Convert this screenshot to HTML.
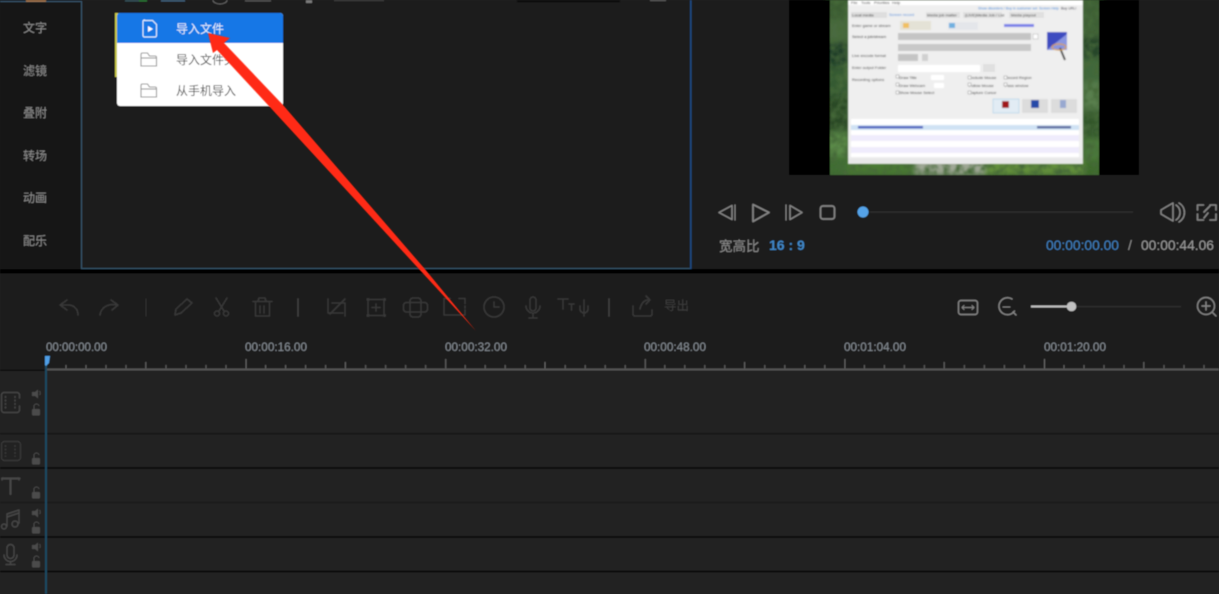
<!DOCTYPE html>
<html lang="zh">
<head>
<meta charset="utf-8">
<title>视频编辑器</title>
<style>
html,body{margin:0;padding:0;width:1219px;height:594px;overflow:hidden;background:#1e1e1e}
svg{display:block;position:absolute;left:0;top:0}
text{font-family:"Liberation Sans","Noto Sans CJK SC",sans-serif}
</style>
</head>
<body>
<svg width="1219" height="594" viewBox="0 0 1219 594" xmlns="http://www.w3.org/2000/svg">
<defs>
<filter id="b" x="-2%" y="-2%" width="104%" height="104%"><feGaussianBlur stdDeviation="0.65"/></filter>
<filter id="a" x="-2%" y="-2%" width="104%" height="104%"><feGaussianBlur stdDeviation="0.4"/></filter>
<filter id="b2" x="-2%" y="-2%" width="104%" height="104%"><feGaussianBlur stdDeviation="0.6"/></filter>
<filter id="b3" x="-5%" y="-5%" width="110%" height="110%"><feGaussianBlur stdDeviation="3"/></filter>
<filter id="t" x="0" y="0" width="100%" height="100%">
<feTurbulence type="fractalNoise" baseFrequency="0.16" numOctaves="2" seed="4"/>
<feColorMatrix values="0 0 0 0 0.06  0 0 0 0 0.14  0 0 0 0 0.04  0 0 0 2.2 -0.75"/>
<feGaussianBlur stdDeviation="0.8"/>
<feComposite in2="SourceGraphic" operator="in"/>
</filter>
<pattern id="ticks" x="46" y="356" width="199.6" height="14" patternUnits="userSpaceOnUse">
<g stroke="#6a6a6a" stroke-width="1">
<path d="M0.500 3V13M20 9V13M40 9V13M60 9V13M80 9V13M99.800 6V13M120 9V13M140 9V13M160 9V13M180 9V13"/>
</g>
</pattern>
</defs>

<g filter="url(#b)">
<!-- base panels -->
<rect width="1219" height="594" fill="#1e1e1e"/>
<rect x="0" y="0" width="81" height="268" fill="#141414"/>
<path d="M0 1.500H81.500V268.500H690" fill="none" stroke="#38586f" stroke-width="1.100"/>
<rect x="690" y="0" width="1.600" height="269" fill="#1a4a80"/>
<rect x="0" y="269" width="1219" height="4.500" fill="#000"/>

<!-- clipped top row -->
<rect x="26" y="0" width="20" height="1.800" fill="#a8744a"/>
<rect x="125" y="0" width="14" height="1.500" fill="#34525c"/>
<rect x="139" y="0" width="8" height="1.500" fill="#2a7a34"/>
<rect x="161" y="0" width="24" height="1.500" fill="#40627e"/>
<path d="M213 0a7 4 0 0 0 14 0" fill="none" stroke="#666" stroke-width="1.100"/>
<rect x="245" y="0" width="26" height="1.500" fill="#555"/>
<rect x="306" y="0" width="6" height="3" fill="#7a7a7a"/>
<rect x="334" y="0" width="50" height="1" fill="#444"/>
<rect x="517" y="0" width="103" height="2.500" fill="#111"/>
<rect x="650" y="0" width="16" height="1" fill="#666"/>

<!-- sidebar labels -->
<g font-size="12" fill="#8c8c8c" text-anchor="middle">
<text x="35" y="32">文字</text>
<text x="35" y="75">滤镜</text>
<text x="35" y="117">叠附</text>
<text x="35" y="160">转场</text>
<text x="35" y="202">动画</text>
<text x="35" y="245">配乐</text>
</g>

<!-- popup menu -->
<rect x="115" y="13" width="3" height="64" fill="#c8c84a"/>
<rect x="117" y="13" width="166" height="93" rx="3" fill="#fff"/>
<path d="M117 43V16a3 3 0 0 1 3-3H280a3 3 0 0 1 3 3V43Z" fill="#1677e6"/>
<path d="M144.500 20.500h8l4 4v11a1.500 1.500 0 0 1-1.500 1.500h-10.500a1.500 1.500 0 0 1-1.500-1.500v-14a1.500 1.500 0 0 1 1.500-1.500z" fill="none" stroke="#dcebfb" stroke-width="1.200"/>
<path d="M148 26l5 3-5 3z" fill="#fff"/>
<g fill="none" stroke="#9a9a9a" stroke-width="1.100">
<path d="M141 66V54.500a1.500 1.500 0 0 1 1.500-1.500h5l2 3h5.500a1.500 1.500 0 0 1 1.500 1.500V66z"/>
<path d="M141 58h15.500"/>
<path d="M141 97V85.500a1.500 1.500 0 0 1 1.500-1.500h5l2 3h5.500a1.500 1.500 0 0 1 1.500 1.500V97z"/>
<path d="M141 89h15.500"/>
</g>
<g font-size="12">
<text x="176" y="33" fill="#e6f0fc">导入文件</text>
<text x="176" y="64" fill="#555">导入文件夹</text>
<text x="176" y="95" fill="#555">从手机导入</text>
</g>

<!-- preview -->
<rect x="789" y="0" width="350" height="175" fill="#000"/>
<rect x="830" y="0" width="269" height="175" fill="#3a5f30"/>
<g filter="url(#b3)">
<rect x="826" y="0" width="22" height="20" fill="#3a5c30"/>
<rect x="826" y="20" width="22" height="22" fill="#4a6a40"/>
<rect x="826" y="42" width="22" height="24" fill="#22402a"/>
<rect x="826" y="66" width="22" height="30" fill="#355a30"/>
<rect x="826" y="96" width="22" height="36" fill="#2c4a26"/>
<rect x="826" y="132" width="22" height="24" fill="#5c8c48"/>
<rect x="826" y="156" width="22" height="19" fill="#3f6e30"/>
<rect x="1083" y="0" width="20" height="38" fill="#3d5e34"/>
<rect x="1083" y="38" width="20" height="20" fill="#26452a"/>
<rect x="1083" y="58" width="20" height="24" fill="#40683a"/>
<rect x="1083" y="82" width="20" height="28" fill="#5a8050"/>
<rect x="1083" y="110" width="20" height="28" fill="#33562c"/>
<rect x="1083" y="138" width="20" height="22" fill="#4c7a3a"/>
<rect x="1083" y="160" width="20" height="15" fill="#3c6c2c"/>
<rect x="848" y="160" width="68" height="15" fill="#4a7a32"/>
<rect x="916" y="160" width="68" height="15" fill="#a0a896"/>
<rect x="984" y="160" width="100" height="15" fill="#64903a"/>
</g>
<rect x="830" y="0" width="18" height="175" fill="#000" filter="url(#t)"/>
<rect x="1083" y="0" width="16" height="175" fill="#000" filter="url(#t)"/>
<rect x="848" y="164" width="235" height="11" fill="#000" filter="url(#t)"/>
<rect x="789" y="0" width="41" height="175" fill="#000"/>
<rect x="1099" y="0" width="40" height="175" fill="#000"/>
<rect x="789" y="175" width="350" height="6" fill="#1e1e1e"/>
<g filter="url(#b2)">
<rect x="848" y="0" width="235" height="164" fill="#efefef"/>
<rect x="848" y="0" width="235" height="5" fill="#fff"/>
<rect x="851" y="12" width="36" height="6" fill="#dedede"/>
<rect x="926" y="12" width="34" height="6" fill="#e0e0e0"/>
<rect x="963" y="12" width="39" height="6" fill="#e0e0e0"/>
<rect x="1009" y="12" width="35" height="6" fill="#e0e0e0"/>
<g font-size="4" fill="#333">
<text x="851" y="4">File</text><text x="861" y="4">Tools</text><text x="874" y="4">Priorities</text><text x="892" y="4">Help</text>
<text x="978" y="9.500" fill="#3a86d8" font-size="3.600">Show disorders / Buy in customer set</text>
<text x="1039" y="9.500" fill="#3a86d8" font-size="3.600">Screen Help</text>
<text x="1061" y="9.500" fill="#223" font-size="3.600">Buy URL!</text>
<text x="852" y="16.500">Local media</text>
<text x="889" y="16" fill="#4a8ad8">Screen record</text>
<text x="927" y="16.500">Media job matter</text>
<text x="965" y="16.500">(LIVE)Media Job / List</text>
<text x="1011" y="16.500">Media playout</text>
<text x="852" y="27">Enter game or stream</text>
<text x="852" y="38" fill="#222">Select a job/stream</text>
<text x="852" y="57">Live encode format</text>
<text x="852" y="69">Enter output Folder</text>
<text x="852" y="81">Recording options</text>
<text x="899" y="69">C:\recording</text>
<text x="899" y="79">Draw Title</text>
<text x="899" y="87">Draw Webcam</text>
<text x="899" y="94">Show Mouse Select</text>
<text x="969" y="79">Exclude Mouse</text>
<text x="969" y="87">Follow Mouse</text>
<text x="969" y="94">Capture Cursor</text>
<text x="1005" y="79">Record Region</text>
<text x="1005" y="87">Pass window</text>
<text x="853" y="163">Ready</text>
</g>
<rect x="900" y="21" width="31" height="9" fill="#e4e2d6"/>
<rect x="903" y="23" width="6" height="5" fill="#f0c060"/>
<rect x="948" y="22" width="30" height="8" fill="#e4e6ea"/>
<rect x="949" y="23" width="6" height="5" fill="#70b0e0"/>
<rect x="1004" y="24" width="30" height="3" fill="#7a80e8"/>
<rect x="898" y="33" width="133" height="7" fill="#c4c4c4"/>
<rect x="898" y="44" width="133" height="7" fill="#c8c8c8"/>
<rect x="1033" y="34" width="5" height="5" fill="#fff" stroke="#aaa" stroke-width=".5"/>
<rect x="1047" y="32" width="20" height="18" fill="#3c4cc0"/>
<path d="M1048 49l19-15v16h-19z" fill="#8a96e0"/>
<path d="M1060 48l5 12" stroke="#222" stroke-width="1.800"/>
<ellipse cx="1059" cy="47" rx="7" ry="3" fill="none" stroke="#d8a040" stroke-width="1.200"/>
<rect x="898" y="54" width="20" height="7" fill="#c4c4c4"/>
<rect x="922" y="54" width="6" height="7" fill="#d0d0d0"/>
<rect x="898" y="65" width="82" height="7" fill="#fff"/>
<rect x="983" y="64" width="12" height="8" fill="#e0e0e0"/>
<rect x="931" y="75" width="13" height="5" fill="#fff"/>
<rect x="934" y="83" width="10" height="5" fill="#fff"/>
<g fill="#fff" stroke="#888" stroke-width=".5">
<rect x="896" y="75" width="3" height="3"/><rect x="896" y="83" width="3" height="3"/><rect x="896" y="91" width="3" height="3"/>
<rect x="968" y="76" width="3" height="3"/><rect x="968" y="83" width="3" height="3"/><rect x="968" y="91" width="3" height="3"/>
<rect x="1004" y="76" width="3" height="3"/><rect x="1004" y="83" width="3" height="3"/>
</g>
<rect x="993" y="99" width="26" height="14" fill="#e2ecf4" stroke="#a8cce4" stroke-width=".6"/>
<rect x="1002" y="101" width="7" height="7" fill="#a01818"/>
<rect x="1022" y="99" width="26" height="14" fill="#dcdcdc"/>
<rect x="1031" y="100" width="8" height="8" fill="#2848a8"/>
<rect x="1051" y="99" width="26" height="14" fill="#dcdcdc"/>
<rect x="1060" y="100" width="6" height="8" fill="#98a8d0"/>
<rect x="851" y="119" width="228" height="38" fill="#fff"/>
<rect x="851" y="125" width="228" height="5" fill="#cfe2f4"/>
<rect x="858" y="126" width="65" height="2.500" fill="#4a60c0"/>
<rect x="1037" y="126" width="34" height="2.500" fill="#5a6aa0"/>
<rect x="851" y="135" width="228" height="6" fill="#efecfc"/>
<rect x="851" y="147" width="228" height="6" fill="#efecfc"/>
<rect x="848" y="158" width="235" height="6" fill="#e8e8e8"/>
</g>

<!-- player controls -->
<g fill="none" stroke="#858585" stroke-width="1.500" stroke-linejoin="round" stroke-linecap="round">
<path d="M732 205.500L719 212.500L732 219.500Z"/><path d="M735 205V220" stroke-width="1.200"/>
<path d="M753 204.500L769 212.500L753 221.500Z" stroke-width="1.700"/>
<path d="M786 205V220" stroke-width="1.200"/><path d="M790 205.500L802 212.500L790 219.500Z"/>
<rect x="820.500" y="206" width="14" height="13" rx="2.500" stroke-width="1.700"/>
<path d="M1161 210v4l5 3 7 4v-18l-7 4z"/>
<path d="M1176 205a9 9 0 0 1 0 15M1179 203a11 11 0 0 1 0 19"/>
<path d="M1197.500 210v-5h6M1216 205h-6M1216 205v5M1197.500 214v6h6M1216 214v6h-6M1210 206l-6 6M1208 213l-4 5" stroke-width="1.600"/>
</g>
<rect x="870" y="211.500" width="263" height="1.200" fill="#333"/>
<circle cx="863" cy="212" r="5.500" fill="#55a3e8"/>
<text x="719" y="251" font-size="13.500" fill="#8c8c8c">宽高比</text>
<text x="769" y="250" font-size="14" font-weight="bold" fill="#3f87c8">16 : 9</text>
<text x="1046" y="250" font-size="14" fill="#3f80c0" textLength="73" lengthAdjust="spacingAndGlyphs">00:00:00.00</text>
<text x="1128" y="250" font-size="14" fill="#8c8c8c">/</text>
<text x="1141" y="250" font-size="14" fill="#9a9a9a" textLength="73" lengthAdjust="spacingAndGlyphs">00:00:44.06</text>

<!-- timeline toolbar -->
<g fill="none" stroke="#393939" stroke-width="1.500" stroke-linejoin="round" stroke-linecap="round">
<path d="M67 300l-7 5 7 5M61 305h7c6 0 10 4 10 10"/>
<path d="M111 300l7 5-6 5M117 305c-8-2-16 2-17 10"/>
<path d="M146 299V316" stroke="#303030" stroke-width="1"/>
<path d="M175 315l1-6 11-10 5 4-11 10z"/>
<path d="M216 298l8 13M227 298l-8 13"/><circle cx="217" cy="313.500" r="2.500"/><circle cx="226" cy="313.500" r="2.500"/>
<path d="M253 301.500h19M258 301l1-3h6l1 3M255.500 303v13h14v-13M260 306v7M264 306v7"/>
<path d="M298 299V316" stroke="#404040" stroke-width="1.700"/>
<path d="M328 299v14h15M332 303h13v13M345 299l-15 15"/>
<path d="M368 299.500h16v16h-16zM376 304v7M372 307.500h8"/>
<g fill="#393939" stroke="none"><circle cx="368" cy="299.500" r="1.500"/><circle cx="384.500" cy="299.500" r="1.500"/><circle cx="368" cy="315.500" r="1.500"/><circle cx="384.500" cy="315.500" r="1.500"/></g>
<rect x="403.500" y="302.500" width="24" height="9.500" rx="3"/><rect x="410" y="298" width="11" height="19" rx="3"/>
<path d="M450 298.500h-6v16.500h21v-5M459 298.500h6v5M465 306v2"/>
<circle cx="494" cy="307" r="10"/><path d="M494 302v5h5"/>
<rect x="530" y="297" width="6" height="14" rx="3"/><path d="M526 306a7 7 0 0 0 14 0M533 313v5M529 318h8"/>
<path d="M558 299h10M563 299v10M569 304h5M571.500 304v6M584 300v13M580 306v3a4 4 0 0 0 8 0v-3M584 313v3"/>
<path d="M609 299V316" stroke="#404040" stroke-width="1.700"/>
<path d="M633 306v8a2 2 0 0 0 2 2h15a2 2 0 0 0 2-2v-4M640 309c1-5 4-9 8-9M646 296l4 4-4 4"/>
</g>
<text x="664" y="310" font-size="12.500" fill="#3c3c3c">导出</text>

<!-- zoom controls -->
<g fill="none" stroke="#858585" stroke-width="1.400" stroke-linecap="round" stroke-linejoin="round">
<rect x="958.500" y="300.500" width="19" height="14" rx="2.500"/>
<path d="M962 307.500h12M962 307.500l2-2M962 307.500l2 2M974 307.500l-2-2M974 307.500l-2 2" stroke-width="1"/>
<path d="M1012 299a8.500 8.500 0 1 0 2.500 12M1013 312l3 3"/><path d="M1003 307h7" stroke-width="1.100"/>
<circle cx="1206" cy="306" r="8.500"/><path d="M1212 312l4 4M1202 306h8M1206 302v8"/>
</g>
<rect x="1031" y="305.500" width="40" height="2" fill="#bdbdbd"/>
<rect x="1071" y="306" width="110" height="1.200" fill="#333"/>
<circle cx="1071.500" cy="306.500" r="4.800" fill="#c0c0c0"/>

<!-- ruler -->
<g font-size="12" fill="#868d94">
<text x="46" y="351" textLength="61" lengthAdjust="spacingAndGlyphs">00:00:00.00</text>
<text x="245" y="351" textLength="62" lengthAdjust="spacingAndGlyphs">00:00:16.00</text>
<text x="445" y="351" textLength="62" lengthAdjust="spacingAndGlyphs">00:00:32.00</text>
<text x="644" y="351" textLength="62" lengthAdjust="spacingAndGlyphs">00:00:48.00</text>
<text x="844" y="351" textLength="62" lengthAdjust="spacingAndGlyphs">00:01:04.00</text>
<text x="1044" y="351" textLength="62" lengthAdjust="spacingAndGlyphs">00:01:20.00</text>
</g>
<rect x="46" y="356" width="1173" height="14" fill="url(#ticks)"/>
<rect x="46" y="368.500" width="1173" height="2" fill="#555"/>
<rect x="0" y="369.500" width="46" height="1.500" fill="#111"/>

<!-- tracks -->
<rect x="0" y="371" width="1219" height="223" fill="#212121"/>
<rect x="0" y="433" width="1219" height="1.500" fill="#121212"/>
<rect x="0" y="467" width="1219" height="2" fill="#0f0f0f"/>
<rect x="0" y="502" width="1219" height="1.200" fill="#161616"/>
<rect x="0" y="536" width="1219" height="2" fill="#0f0f0f"/>
<rect x="0" y="570.500" width="1219" height="2" fill="#111"/>
<rect x="45" y="362" width="2" height="232" fill="#1c4a62"/>
<path d="M45 356h5l-1 7-3 3-1-1z" fill="#4f9fe6"/>

<!-- track icons -->
<g fill="none" stroke="#474747" stroke-width="1.500" stroke-linejoin="round" stroke-linecap="round">
<path d="M14 392.500H4a2.500 2.500 0 0 0-2.500 2.500v15a2.500 2.500 0 0 0 2.500 2.500H14M14 392.500h3a2.500 2.500 0 0 1 2.500 2.500v3M19.500 406v4a2.500 2.500 0 0 1-2.500 2.500h-3"/>
<rect x="1.500" y="441.500" width="19" height="19" rx="3" stroke="#383838"/>
<path d="M2 478.500h17.500M10.500 478.500V494" stroke-width="2.200"/>
<path d="M2 480c0-1 0-2 1-2M19 480c0-1 0-2-1-2"/>
<circle cx="4" cy="526.500" r="2.500"/><circle cx="15" cy="524" r="3"/>
<path d="M7 526V514l12-4v13M7 517l12-4"/>
<rect x="7" y="544.500" width="7" height="14" rx="3.500"/>
<path d="M4 555a6.500 6.500 0 0 0 13 0M10.500 561.500v2.500M6 564.500h9"/>
</g>
<g fill="none" stroke-width="1.600" stroke-dasharray="2 1.500">
<path d="M5.500 396v13M15 396v13" stroke="#444"/>
<path d="M5.500 445v12M15 445v12" stroke="#373737"/>
</g>
<g fill="#4c4c4c">
<path d="M32 392h3l3-2.500v9l-3-2.500h-3z"/>
<path d="M32 511h3l3-2.500v9l-3-2.500h-3z"/>
<path d="M32 545h3l3-2.500v9l-3-2.500h-3z"/>
<rect x="32" y="409" width="8" height="6.500" rx="1"/>
<rect x="32" y="458" width="8" height="6.500" rx="1"/>
<rect x="32" y="492" width="8" height="6.500" rx="1"/>
<rect x="32" y="527" width="8" height="6.500" rx="1"/>
<rect x="32" y="561" width="8" height="6.500" rx="1"/>
</g>
<g fill="none" stroke="#4c4c4c" stroke-width="1">
<path d="M34 409v-2a2.500 2.500 0 0 1 5-1M34 458v-2a2.500 2.500 0 0 1 5-1M34 492v-2a2.500 2.500 0 0 1 5-1M34 527v-2a2.500 2.500 0 0 1 5-1M34 561v-2a2.500 2.500 0 0 1 5-1"/>
<path d="M39.500 391a3 3 0 0 1 0 4M39.500 510a3 3 0 0 1 0 4M39.500 544a3 3 0 0 1 0 4"/>
</g>
</g>

<!-- red annotation arrow -->
<path d="M208 33L230 38L224 43L283 105L424 268L476 331L418 268L268 105L217 50L213 53Z" fill="#ff2a12" filter="url(#a)"/>
</svg>
</body>
</html>
